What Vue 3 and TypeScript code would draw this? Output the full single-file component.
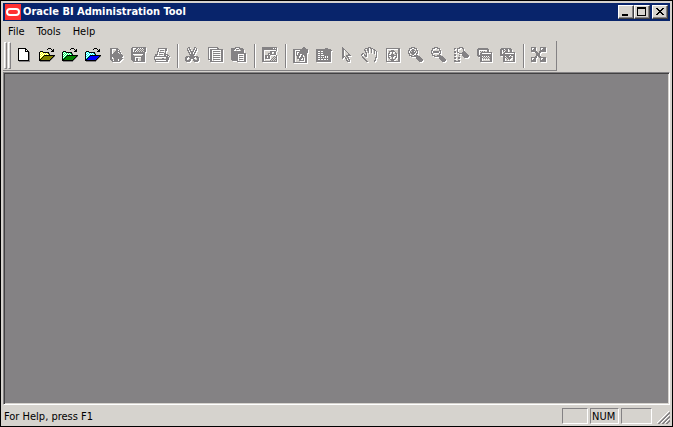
<script setup lang="ts">
import { computed, ref } from 'vue'

interface Tool {
  name: string
  rows: string[]
  disabled: boolean
  tint?: [string, string]
}

const folder = [
  '',
  '..........kkk...',
  '.........k...k.k',
  '..............kk',
  '..kkk........kkk',
  '.kywykkkkkk.....',
  '.kwywywywyks....',
  '.kywywywywyk....',
  '.kwywykkkkkkkkkkk',
  '.kywykoooooooooks',
  '.kwykoooooooooks',
  '.kykoooooooooks.',
  '.kkoooooooooks..',
  '.kkkkkkkkkkks...',
  '..ssssssssss....',
]

const groups: Tool[][] = [
  [
    {
      name: 'New', disabled: false, rows: [
        '',
        '...kkkkkkkk.....',
        '...kwwwwwwkk....',
        '...kwwwwwwkwk...',
        '...kwwwwwwkkkk..',
        '...kwwwwwwwwwks.',
        '...kwwwwwwwwwks.',
        '...kwwwwwwwwwks.',
        '...kwwwwwwwwwks.',
        '...kwwwwwwwwwks.',
        '...kwwwwwwwwwks.',
        '...kwwwwwwwwwks.',
        '...kwwwwwwwwwks.',
        '...kkkkkkkkkkks.',
        '....sssssssssss.',
      ],
    },
    { name: 'Open offline', disabled: false, rows: folder, tint: ['#ffff00', '#848200'] },
    { name: 'Open online', disabled: false, rows: folder, tint: ['#00ff63', '#008200'] },
    { name: 'Open MDS', disabled: false, rows: folder, tint: ['#00ffff', '#0000ff'] },
    {
      name: 'Check in', disabled: true, rows: [
        '',
        '...gggggggg.....',
        '...gg....ggg....',
        '...gg....gg.g...',
        '...gg...ggggg...',
        '...gg..gggg.gg..',
        '...gg.gggggg.g..',
        '...gggggggggggg.',
        '...ggggggggggggg',
        '...ggggggggggggg',
        '...gg.ggggggggg.',
        '...gg..ggggggggg',
        '...ggg.gggg.ggg.',
        '....gg.gggg.gg..',
        '.....gggggggg...',
      ],
    },
    {
      name: 'Save', disabled: true, rows: [
        '..gggggggggggggg',
        '.gg...gg.g.g.ggg',
        '.gg..gg.g.g.g.gg',
        '.gg.gg.g.g.g.ggg',
        '.gg.g.g.g.g.g.gg',
        '.gggggggggggggg.',
        '.gggggggggggggg.',
        '.gg..........gg.',
        '.ggg........ggg.',
        '.gggggggggggggg.',
        '.gggg......gggg.',
        '.gggg.gg...gggg.',
        '.gggg.gg...gggg.',
        '..ggg.gg...gggg.',
        '...gggggggggggg.',
      ],
    },
    {
      name: 'Print', disabled: true, rows: [
        '',
        '.....ggggggggg..',
        '.....g......gg..',
        '.....g.gggg.gg..',
        '....gg......g...',
        '....g.ggggg.g...',
        '....g......gg...',
        '..ggg.gggg.gggg.',
        '..gg.......gg.gg',
        '.gggggggggggggg.g',
        '.g...........ggg',
        '.g.......gg..ggg',
        '.ggggggggggggggg',
        '..g..........gg.',
        '..ggggggggggggg.',
      ],
    },
  ],
  [
    {
      name: 'Cut', disabled: true, rows: [
        '....gg....gg....',
        '...g.g....g.g...',
        '...g.gg..gg.g...',
        '...gg.g..g.gg...',
        '....g.gggg.g....',
        '....gg.gg.gg....',
        '.....g.gg.g.....',
        '.....gggggg.....',
        '......gggg......',
        '..gggggggggggg..',
        '.ggg.gggggg.ggg.',
        '.gg...gggg...gg.',
        '.gg..gg..gg..gg.',
        '.gggggg..gggggg.',
        '..gggg....gggg..',
      ],
    },
    {
      name: 'Copy', disabled: true, rows: [
        '.gggggggggg.....',
        '.g........gg....',
        '.g.ggggggggggggg',
        '.g.gg.........gg',
        '.g.gg.ggggggg.gg',
        '.g.gg.........gg',
        '.g.gg.ggggggg.gg',
        '.g.gg.........gg',
        '.g.gg.ggggggg.gg',
        '.g.gg.........gg',
        '.g.gg.ggggggg.gg',
        '.g.gg.........gg',
        '.gggg.ggggggg.gg',
        '...gg.........gg',
        '...ggggggggggggg',
      ],
    },
    {
      name: 'Paste', disabled: true, rows: [
        '.....ggggg......',
        '.ggggg...gggg...',
        '.gggg.ggg.gggg..',
        '.ggg.......ggg..',
        '.ggggggggggggg..',
        '.ggggggggggggg..',
        '.ggggggggggggggg',
        '.ggggggg......gg',
        '.ggggggg.gggg.gg',
        '.ggggggg......gg',
        '.ggggggg.gggg.gg',
        '.ggggggg......gg',
        '.ggggggg.gggg.gg',
        '..gggggg......gg',
        '.......ggggggggg',
      ],
    },
  ],
  [
    {
      name: 'Find again', disabled: true, rows: [
        '.ggggggggggggggg',
        '.ggggggggggg.g.g',
        '.ggggggggggggggg',
        '.gg............g',
        '.gg......gggggg.g',
        '.gg......gg..gg.g',
        '.gg....gggg..gg.g',
        '.gg....g.gggggg.g',
        '.gg.ggggg......g',
        '.gg.gg.gg....g.g',
        '.gg.gg.gg...g.gg',
        '.gg.ggggg..g.g.g',
        '.gg.......g.g.gg',
        '.gg......g.g.g.g',
        '.ggggggggggggggg',
      ].map((row) => row.slice(0, 16)),
    },
  ],
  [
    {
      name: 'Add star', disabled: true, rows: [
        '...........gg...',
        '..........gggg..',
        '.ggggggggggggggg',
        '.gg.....gggggggg',
        '.gg.gggggggggggg',
        '.gg.g..ggggggggg',
        '.gg.g.ggggggggg.',
        '.gg.g.gg..ggggg.',
        '.gg.gggg.gg.ggg.',
        '.gg..gg..gg..gg.',
        '.gg..gg.gggg.gg.',
        '.gg..ggggg.g.gg.',
        '.gg....gg..g.gg.',
        '.gg....ggggg.gg.',
        '.gg..........gg.',
        '.gggggggggggggg.',
      ],
    },
    {
      name: 'Add table', disabled: true, rows: [
        '',
        '..........ggg...',
        '.ggggggggggggggg',
        '.gggggggggggggggg',
        '.gg..g..gggggggg',
        '.ggggggggggggggg',
        '.gg..g..gggggggg',
        '.ggggggggggggggg',
        '.gg..g...ggggggg',
        '.ggggggggg.g.ggg',
        '.gg..g.g.g.g.ggg',
        '.ggggggggggggggg',
        '.gg..g..g..g.ggg',
        '.ggggggggggggggg',
        '.ggggggggggggggg',
      ],
    },
    {
      name: 'Select', disabled: true, rows: [
        '....g...........',
        '....gg..........',
        '....ggg.........',
        '....gg.g........',
        '....gg..g.......',
        '....gg...g......',
        '....gg....g.....',
        '....gg....gg....',
        '....gg..ggggg...',
        '....ggg.gg......',
        '....gg.g.gg.....',
        '....g..gg.g.....',
        '........g.gg....',
        '........gg.g....',
        '.........ggg....',
      ],
    },
    {
      name: 'Pan', disabled: true, rows: [
        '.......ggg......',
        '....gggg.ggg....',
        '...g..gg..g.gg..',
        '...gg.gg..g..gg.',
        '....g..g..g..g.g',
        '....gg.g..g..g.g',
        '.gg..g.......g.g',
        'gg.g.g.........g',
        'g..ggg.........g',
        '.g..gg.........g',
        '.gg...........gg',
        '..gg..........g.',
        '...gg.........g.',
        '....gg.......gg.',
        '.....gg......g..',
      ],
    },
    {
      name: 'Fit', disabled: true, rows: [
        '',
        '..gggggggggggggg',
        '..g...........gg',
        '..g....ggg....gg',
        '..g..gggggg...gg',
        '..g..g..g..g..gg',
        '..g.gg..g..gg.gg',
        '..g.g..ggg..g.gg',
        '..g.ggggggggg.gg',
        '..g.g..ggg..g.gg',
        '..g.gg..g..gg.gg',
        '..g..g..g..g..gg',
        '..g...ggggg...gg',
        '..g....ggg....gg',
        '..gggggggggggggg',
      ],
    },
    {
      name: 'Zoom in', disabled: true, rows: [
        '....gggg........',
        '..ggg..ggg......',
        '..g..gg..g......',
        '.gg.gggg.gg.....',
        '.g.g.gg.g.g.....',
        '.g.gggggg.g.....',
        '.gg.gggg.gg.....',
        '..g..gg..g......',
        '..ggg..gggg.....',
        '....ggggggggg...',
        '.........ggggg..',
        '.........gggggg.',
        '..........gggggg',
        '...........ggggg',
        '............ggg.',
      ],
    },
    {
      name: 'Zoom out', disabled: true, rows: [
        '....gggg........',
        '..ggg..ggg......',
        '..g......g......',
        '.gg......gg.....',
        '.g.gggggg.g.....',
        '.g.gggggg.g.....',
        '.gg......gg.....',
        '..g......g......',
        '..ggg..gggg.....',
        '....ggggggggg...',
        '.........ggggg..',
        '.........gggggg.',
        '..........gggggg',
        '...........ggggg',
        '............ggg.',
      ],
    },
    {
      name: 'Marquee zoom', disabled: true, rows: [
        '......gggg......',
        '.gg.ggg..gg.....',
        '.g..g.....g.....',
        '....g.....g.....',
        '.gg.g.....gg....',
        '.gg.gg...gggg...',
        '......gggggggg..',
        '.gg......gggggg.',
        '.gg...g..ggggggg',
        '..........gggggg',
        '.gg..gg....gggg.',
        '.gg..gg.........',
        '................',
        '.gg..gg.........',
        '.gggggg.........',
      ],
    },
    {
      name: 'Collapse', disabled: true, rows: [
        '',
        '..gggggggggg....',
        '.gggggggggggg...',
        '.gg........gg...',
        '.gg.g.g.g..gg...',
        '.gg..ggggggggggg',
        '.gg.gg.........g',
        '.gg.gggggggggggg',
        '.ggggggggggggggg',
        '..gggg.g.g.g.ggg',
        '....ggg.g.g.g.gg',
        '....gg.g.g.g.ggg',
        '....gg........gg',
        '....gg........gg',
        '....gggggggggggg',
      ],
    },
    {
      name: 'Expand', disabled: true, rows: [
        '',
        '..gggggggggg....',
        '.gggg.ggg.ggg...',
        '.gg.gg.gg..gg...',
        '.gg.g.ggg..gg...',
        '.gg..ggggggggggg',
        '.gg.gg.........g',
        '.ggggggggggggggg',
        '.gggggggggg.gggg',
        '....gg.ggg.g..gg',
        '....ggg.ggggg.gg',
        '....gg.g.ggg..gg',
        '....gg..g.g...gg',
        '....gg........gg',
        '....gggggggggggg',
      ],
    },
  ],
  [
    {
      name: 'Auto layout', disabled: true, rows: [
        '.ggggg....gggggg',
        '.g..gg....g..ggg',
        '.g.ggg....g.gggg',
        '.ggggg....gggggg',
        '.gggggg..ggggggg',
        '.....ggg.gg.....',
        '......gggg......',
        '......gggg......',
        '......gggg......',
        '.....gg.ggg.....',
        '.gggggg..ggggggg',
        '.g..gg....g..ggg',
        '.g.ggg....g.gggg',
        '.ggggg....gggggg',
        '.ggggg....gggggg',
      ],
    },
  ],
]

const palette: Record<string, string> = { k: '#000000', w: '#ffffff', s: '#848284', g: '#848284' }

function trace(rows: string[], key: string): string {
  let d = ''
  rows.forEach((row, y) => {
    for (let x = 0; x < row.length; x++) {
      if (row[x] !== key) continue
      const start = x
      while (row[x + 1] === key) x++
      const w = x - start + 1
      d += `M${start} ${y}h${w}v1h-${w}z`
    }
  })
  return d
}

const toolbar = computed(() =>
  groups.map((group) =>
    group.map((tool) => {
      const colours: Record<string, string> = { ...palette }
      if (tool.tint) {
        colours.y = tool.tint[0]
        colours.o = tool.tint[1]
      }
      return {
        name: tool.name,
        disabled: tool.disabled,
        relief: tool.disabled ? trace(tool.rows, 'g') : '',
        layers: Object.keys(colours)
          .map((key) => ({ key, fill: colours[key], d: trace(tool.rows, key) }))
          .filter((layer) => layer.d !== ''),
      }
    }),
  ),
)

const menus = ['File', 'Tools', 'Help']
const status = ref('For Help, press F1')
</script>

<template>
  <div class="window">
    <header class="titlebar">
      <svg class="logo" viewBox="0 0 16 16" aria-hidden="true">
        <rect width="16" height="16" fill="#ff3031" />
        <rect x="2" y="5" width="12" height="6" rx="3" fill="none" stroke="#fff" stroke-width="2" />
      </svg>
      <h1>Oracle BI Administration Tool</h1>
      <div class="controls">
        <button type="button" aria-label="Minimize">
          <svg viewBox="0 0 12 10"><path d="M2 7h6v2h-6z" /></svg>
        </button>
        <button type="button" aria-label="Maximize">
          <svg viewBox="0 0 12 10"><path fill-rule="evenodd" d="M1 0h9v9h-9zM2 2v6h7v-6z" /></svg>
        </button>
        <button type="button" class="close" aria-label="Close">
          <svg viewBox="0 0 12 10">
            <path d="M2 1h2v1h1v1h2v-1h1v-1h2v1h-1v1h-1v1h-1v1h1v1h1v1h1v1h-2v-1h-1v-1h-2v1h-1v1h-2v-1h1v-1h1v-1h1v-1h-1v-1h-1v-1h-1z" />
          </svg>
        </button>
      </div>
    </header>

    <nav class="menubar">
      <button v-for="menu in menus" :key="menu" type="button">{{ menu }}</button>
    </nav>

    <div class="toolbar-row">
      <div class="toolbar" role="toolbar">
        <span class="grip" /><span class="grip" />
        <div v-for="(group, g) in toolbar" :key="g" class="group">
          <button
            v-for="tool in group"
            :key="tool.name"
            type="button"
            :aria-label="tool.name"
            :disabled="tool.disabled"
          >
            <svg viewBox="0 0 18 17">
              <path v-if="tool.relief" :d="tool.relief" fill="#fff" transform="translate(1 1)" />
              <path v-for="layer in tool.layers" :key="layer.key" :d="layer.d" :fill="layer.fill" />
            </svg>
          </button>
        </div>
      </div>
    </div>

    <main class="workspace" />

    <footer class="statusbar">
      <span class="message">{{ status }}</span>
      <span class="pane" />
      <span class="pane num">NUM</span>
      <span class="pane wide" />
      <svg class="resize" viewBox="0 0 13 13" aria-hidden="true">
        <path d="M0 12L12 0M4 12L12 4M8 12L12 8" stroke="#fff" />
        <path d="M1 13L13 1M2 13L13 2M5 13L13 5M6 13L13 6M9 13L13 9M10 13L13 10" stroke="#848284" />
      </svg>
    </footer>
  </div>
</template>

<style>
body {
  margin: 0;
}
</style>

<style scoped>
* {
  box-sizing: border-box;
}

.window {
  display: flex;
  flex-direction: column;
  min-height: 100vh;
  padding: 2px;
  border: 1px solid #000;
  background: #d6d3ce;
  color: #000;
  font: 11px/14px Tahoma, "DejaVu Sans Condensed", "DejaVu Sans", sans-serif;
}

button {
  padding: 0;
  border: 0;
  background: transparent;
  color: inherit;
  font: inherit;
}

svg {
  display: block;
  shape-rendering: crispEdges;
}

.titlebar {
  display: flex;
  align-items: center;
  height: 18px;
  padding: 0 2px;
  background: #08246b;
  color: #fff;
}

.logo {
  width: 16px;
  height: 16px;
  margin-right: 2px;
  shape-rendering: auto;
}

h1 {
  flex: 1;
  margin: 0;
  font-size: 11px;
  line-height: 16px;
  font-weight: bold;
  white-space: nowrap;
}

.controls {
  display: flex;
}

.controls button {
  width: 16px;
  height: 14px;
  padding: 1px;
  border: 1px solid;
  border-color: #fff #424142 #424142 #fff;
  background: #d6d3ce;
  box-shadow: inset -1px -1px #848284;
}

.controls svg {
  width: 12px;
  height: 10px;
}

.controls .close {
  margin-left: 2px;
}

.menubar {
  display: flex;
  height: 20px;
}

.menubar button {
  padding: 2px 7px 0 5px;
}

.toolbar-row {
  display: flex;
  padding-bottom: 1px;
}

.toolbar {
  display: flex;
  height: 30px;
  padding: 1px 6px 0 1px;
  border-right: 1px solid #848284;
  border-bottom: 1px solid #848284;
}

.grip {
  width: 3px;
  height: 27px;
  margin-right: 1px;
  border: 1px solid;
  border-color: #fff #848284 #848284 #fff;
}

.group {
  display: flex;
  padding: 2px 0;
}

.group + .group::before {
  content: "";
  width: 8px;
  background: linear-gradient(90deg, transparent 4px, #848284 4px 5px, #fff 5px 6px, transparent 6px);
}

.group button {
  width: 23px;
  height: 23px;
  padding: 3px 2px 3px 3px;
}

.group svg {
  width: 18px;
  height: 17px;
}

.workspace {
  flex: 1;
  border: 1px solid;
  border-color: #848284 #fff #fff #848284;
  background: #848284;
  box-shadow: inset 1px 1px #424142, inset -1px -1px #d6d3ce;
}

.statusbar {
  display: flex;
  align-items: stretch;
  gap: 2px;
  height: 19px;
  padding: 3px 0 0 1px;
}

.message {
  flex: 1;
  line-height: 17px;
}

.pane {
  width: 26px;
  border: 1px solid;
  border-color: #848284 #fff #fff #848284;
  line-height: 15px;
}

.num {
  width: 29px;
  padding-left: 1px;
}

.wide {
  width: 31px;
}

.resize {
  align-self: flex-end;
  width: 13px;
  height: 13px;
  margin-left: 3px;
}
</style>
